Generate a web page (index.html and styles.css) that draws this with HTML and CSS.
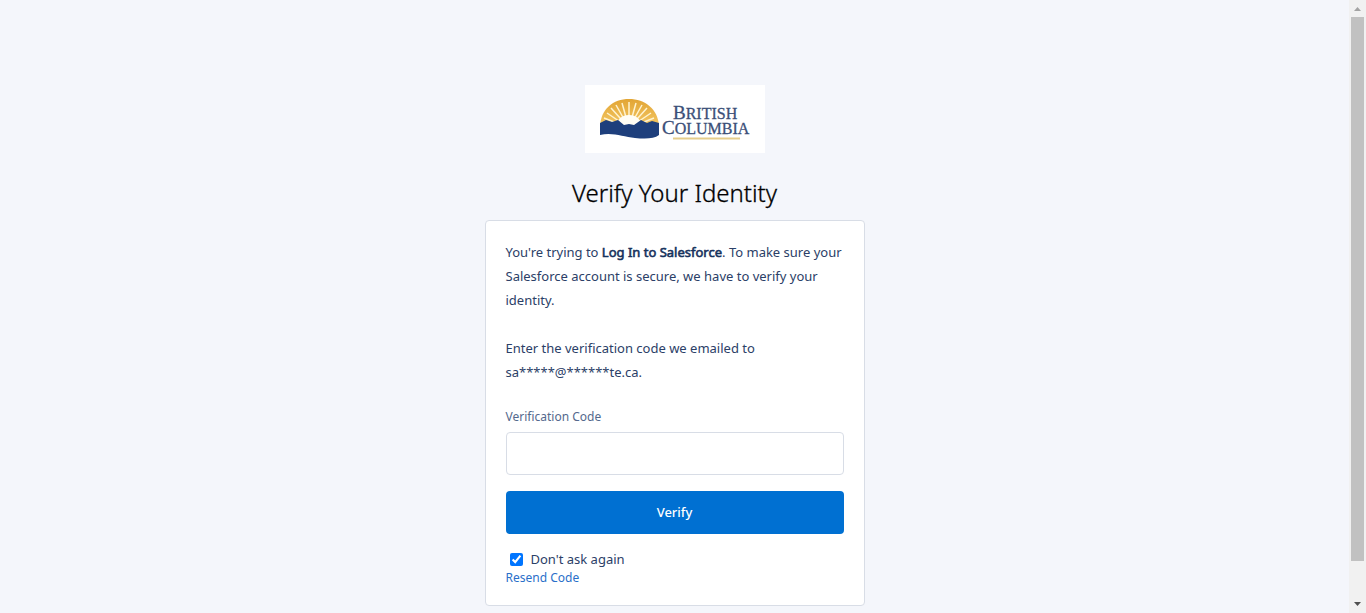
FILE: index.html
```html
<!DOCTYPE html>
<html lang="en">
<head>
<meta charset="utf-8">
<meta name="viewport" content="width=device-width, initial-scale=1">
<title>Verify Your Identity</title>
<link rel="stylesheet" href="styles.css">
</head>
<body>
<div class="viewport">
  <main class="page">
    <svg class="logo" viewBox="0 0 180 68" role="img" aria-label="British Columbia">
      <defs>
        <linearGradient id="sun" x1="0" y1="0" x2="0" y2="1">
          <stop offset="0" stop-color="#e2a534"/>
          <stop offset="1" stop-color="#f3c765"/>
        </linearGradient>
      </defs>
      <rect width="180" height="68" fill="#fff"/>
      <path d="M15 41C16 24 28 14 44 14s29 10 30 27z" fill="url(#sun)"/>
      <g stroke="#fff3cf" stroke-width="1.500">
        <path d="M44 43L19 33M44 43L22 28M44 43L26 23M44 43L31 20M44 43L37 18M44 43V17M44 43L51 18M44 43L57 20M44 43L62 23M44 43L66 28M44 43L69 33"/>
      </g>
      <path d="M31 42c1-8 6-12 13-12s12 4 13 12z" fill="#fffdf5"/>
      <path d="M15 38l6-3 6 2 6-2 6 5 5-1 5 1 7-5 6 3 5-2 7 2v12c-5 4-14 4-24 3-12-1-22-6-35-3z" fill="#1e3f7c"/>
      <text class="logo-text" x="88" y="34"><tspan class="logo-cap">B</tspan>RITISH</text>
      <text class="logo-text" x="77" y="49"><tspan class="logo-cap">C</tspan>OLUMBIA</text>
      <path d="M88 53.500h67" stroke="#e6cd8b" stroke-width="2"/>
    </svg>
    <h1 class="title">Verify Your Identity</h1>
    <form class="card">
      <p class="copy">You're trying to <strong>Log In to Salesforce</strong>. To make sure your Salesforce account is secure, we have to verify your identity.</p>
      <p class="copy">Enter the verification code we emailed to sa*****@******te.ca.</p>
      <label class="field-label" for="code">Verification Code</label>
      <input class="field" id="code" type="text" autocomplete="one-time-code">
      <button class="verify" type="button">Verify</button>
      <div class="remember">
        <input class="check" id="remember" type="checkbox" checked>
        <label for="remember">Don't ask again</label>
      </div>
      <a class="resend" href="#">Resend Code</a>
    </form>
  </main>
  <div class="scrollbar" aria-hidden="true">
    <svg class="arrow" viewBox="0 0 17 17"><path d="M5 11h7L8.500 7z" fill="#a3a3a3"/></svg>
    <div class="track"><div class="thumb"></div></div>
    <svg class="arrow" viewBox="0 0 17 17"><path d="M5 6h7L8.500 10z" fill="#505050"/></svg>
  </div>
</div>
</body>
</html>
```
FILE: styles.css
```css
* {
  box-sizing: border-box;
}

body {
  margin: 0;
  background: #f4f6fb;
  color: #2b4067;
  font-family: "Noto Sans", "Open Sans", sans-serif;
  font-size: 13px;
}

.viewport {
  display: flex;
  height: 100vh;
  overflow: hidden;
}

.page {
  flex: 1;
  display: flex;
  flex-direction: column;
  align-items: center;
  padding-top: 85px;
}

.logo {
  width: 180px;
  height: 68px;
  flex: none;
}

.logo-text {
  font-family: "Liberation Serif", serif;
  font-size: 16px;
  fill: #3b4f78;
  stroke: #3b4f78;
  stroke-width: 0.3px;
}

.logo-cap {
  font-size: 19px;
}

.title {
  margin: 24px 0 11px;
  color: #000;
  font-size: 24px;
  font-weight: 300;
  line-height: 32px;
  -webkit-text-stroke: 0.3px #000;
}

.card {
  display: flex;
  flex-direction: column;
  width: 100%;
  max-width: 380px;
  padding: 19px 20px 18px;
  border: 1px solid #d8dde6;
  border-radius: 4px;
  background: #fff;
}

.copy {
  margin: 0 0 24px;
  line-height: 24px;
}

.copy strong {
  color: #16325c;
  font-weight: 400;
  -webkit-text-stroke: 0.6px currentColor;
}

.field-label {
  margin: 1px 0 7px;
  color: #54698d;
  font-size: 12px;
  line-height: 16px;
}

.field {
  width: 100%;
  height: 43px;
  margin-bottom: 16px;
  padding: 0 12px;
  border: 1px solid #d8dde6;
  border-radius: 4px;
  background: #fff;
  font: inherit;
}

.verify {
  height: 43px;
  margin-bottom: 16px;
  padding: 0 0 2px;
  border: 0;
  border-radius: 4px;
  background: #0070d2;
  color: #fff;
  font: inherit;
  font-weight: 500;
}

.remember {
  display: flex;
  align-items: center;
  gap: 8px;
  padding-left: 4px;
  line-height: 18px;
}

.check {
  width: 13px;
  height: 13px;
  margin: 0;
  accent-color: #0075ff;
}

.resend {
  align-self: flex-start;
  color: #2a6fc9;
  font-size: 12px;
  line-height: 19px;
  text-decoration: none;
}

.scrollbar {
  display: flex;
  flex-direction: column;
  width: 17px;
  background: #f1f1f1;
}

.arrow {
  width: 17px;
  height: 17px;
}

.track {
  flex: 1;
  padding: 0 2px;
}

.thumb {
  height: 94%;
  background: #c1c1c1;
}
```
